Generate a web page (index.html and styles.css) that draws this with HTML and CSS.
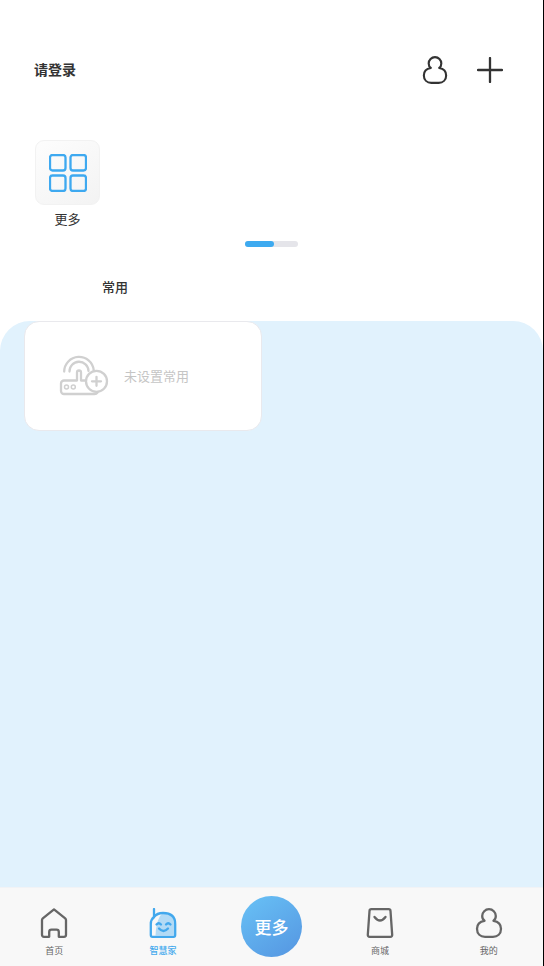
FILE: index.html
```html
<!DOCTYPE html>
<html lang="zh-CN">
<head>
<meta charset="utf-8">
<meta name="viewport" content="width=device-width, initial-scale=1">
<title>智慧家</title>
<link rel="stylesheet" href="styles.css">
</head>
<body>
<svg class="symbols" aria-hidden="true">
  <symbol id="person" viewBox="0 0 28 30">
    <path d="M9.500 12.800C7.600 11.500 7.200 9.500 7.200 8a6.800 6.800 0 0 1 13.600 0C20.800 9.500 20.400 11.500 18.500 12.800C23 13.500 26 16.500 26 20.800C26 25.800 22.500 28.800 18 28.800H10C5.500 28.800 2 25.800 2 20.800C2 16.500 5 13.500 9.500 12.800Z"/>
  </symbol>
</svg>
<header class="topbar">
  <a class="login" href="#login">请登录</a>
  <div class="actions">
    <button type="button" aria-label="账户"><svg class="icon-person" viewBox="0 0 28 30"><use href="#person"/></svg></button>
    <button type="button" aria-label="添加"><svg class="icon-plus" viewBox="0 0 26 26"><path d="M13 1v24M1 13h24"/></svg></button>
  </div>
</header>
<main>
  <section class="shortcuts">
    <a class="shortcut" href="#more">
      <span class="tile">
        <svg viewBox="0 0 38 38"><rect x="1" y="1" width="15.500" height="15.500" rx="2.500"/><rect x="21.500" y="1" width="15.500" height="15.500" rx="2.500"/><rect x="1" y="21.500" width="15.500" height="15.500" rx="2.500"/><rect x="21.500" y="21.500" width="15.500" height="15.500" rx="2.500"/></svg>
      </span>
      <span>更多</span>
    </a>
    <div class="pager"><span></span></div>
  </section>
  <h2>常用</h2>
  <section class="panel">
    <a class="card" href="#common">
      <svg viewBox="0 0 50 42">
        <path d="M5.200 16.500a14.800 14.800 0 0 1 29.500-1.500M10.500 16.500a9.500 9.500 0 0 1 19-.5"/>
        <path d="M27 25.500H22V17.500a2 2 0 0 0-4 0V25.500H5a3 3 0 0 0-3 3V36A3 3 0 0 0 5 39H35.500Q37.500 39 38.500 37.500"/>
        <circle cx="37.500" cy="26.300" r="10.500"/>
        <path d="M37.500 21.800v9M33 26.300h9"/>
        <g class="fine"><circle cx="7.500" cy="32" r="2"/><circle cx="14.300" cy="32" r="2"/></g>
      </svg>
      <span>未设置常用</span>
    </a>
  </section>
</main>
<nav class="tabs">
  <a href="#home"><svg viewBox="0 0 28 30"><path d="M2.800 10.300L14 1.400L25.200 10.300Q26 11 26 12V26.800Q26 28.800 24 28.800H18.800V24Q18.800 21.700 16.500 21.700H11.500Q9.200 21.700 9.200 24V28.800H4Q2 28.800 2 26.800V12Q2 11 2.800 10.300Z"/></svg><span>首页</span></a>
  <a class="active" href="#smart" aria-current="page"><svg viewBox="0 0 28 30"><path class="face" d="M11 8Q7 15 6.500 27.500H25V15Q25 7 18 6H13Z"/><path d="M5 1V9.500M5 9Q8 5 14 5Q26.200 5 26.200 16V27Q26.200 28.800 24.500 28.800H3.500Q1.800 28.800 1.800 27V16Q1.800 11.500 5 9"/><path d="M7.500 16.500Q9.700 14 12 16.500M17 16.500Q19.200 14 21.500 16.500M10 20.500Q14.500 25.500 19 20.500"/></svg><span>智慧家</span></a>
  <a class="main-tab" href="#all"><span>更多</span></a>
  <a href="#shop"><svg viewBox="0 0 28 30"><path d="M5.300 1.200H22.700Q24.400 1.200 24.500 3L26.200 26.800Q26.300 28.800 24.300 28.800H3.700Q1.700 28.800 1.800 26.800L3.500 3Q3.600 1.200 5.300 1.200Z"/><path d="M8.500 9Q14 16 19.500 9"/></svg><span>商城</span></a>
  <a href="#mine"><svg viewBox="0 0 28 30"><use href="#person"/></svg><span>我的</span></a>
</nav>
</body>
</html>
```
FILE: styles.css
```css
* { box-sizing: border-box; }
body {
  margin: 0;
  min-height: 100vh;
  display: flex;
  flex-direction: column;
  border-right: 1px solid #000;
  background: #fff;
  color: #333;
  font-family: "Noto Sans CJK SC", sans-serif;
  font-size: 13px;
  line-height: 20px;
}
a { color: inherit; text-decoration: none; }
svg {
  display: block;
  fill: none;
  stroke: currentColor;
  stroke-width: 2.3;
  stroke-linecap: round;
  stroke-linejoin: round;
}
.symbols { position: absolute; width: 0; height: 0; }
.topbar {
  display: flex;
  align-items: flex-start;
  justify-content: space-between;
  padding: 54px 40px 0 34px;
}
.login { padding-top: 5px; font-size: 14px; font-weight: 700; }
.actions { display: flex; gap: 29px; }
.actions button {
  display: flex;
  align-items: center;
  height: 32px;
  padding: 0;
  border: 0;
  background: none;
  color: #333;
}
.icon-person { width: 26px; height: 28px; }
.icon-plus { width: 26px; height: 26px; }
main { flex: 1; display: flex; flex-direction: column; }
.shortcuts { padding: 54px 35px 0; }
.shortcut {
  display: flex;
  flex-direction: column;
  align-items: center;
  gap: 4px;
  width: 65px;
}
.tile {
  display: grid;
  place-items: center;
  width: 65px;
  height: 65px;
  border: 1px solid #f2f2f2;
  border-radius: 9px;
  background: linear-gradient(145deg, #fdfdfd, #f3f3f3);
  color: #3ea9f0;
}
.tile svg { width: 38px; height: 38px; }
.pager {
  width: 53px;
  height: 6px;
  margin: 12px auto 0;
  border-radius: 3px;
  background: #e5e5ea;
}
.pager span {
  display: block;
  width: 55%;
  height: 100%;
  border-radius: 3px;
  background: #3daaf0;
}
h2 {
  margin: 30px 0 24px 102px;
  font-size: 13px;
  font-weight: 500;
}
.panel {
  flex: 1;
  border-radius: 30px 30px 0 0;
  background: #e1f2fd;
  padding: 0 24px;
}
.card {
  display: flex;
  align-items: center;
  gap: 15px;
  width: 48%;
  min-width: 237px;
  height: 110px;
  padding-left: 34px;
  border: 1px solid #e9e9ed;
  border-radius: 15px;
  background: #fff;
  color: #c5c5c5;
}
.card svg { width: 50px; height: 42px; color: #d0d0d0; }
.card .fine { stroke-width: 1.5; }
.tabs {
  display: grid;
  grid-template-columns: repeat(5, 1fr);
  height: 79px;
  border-top: 1px solid #f1f3f6;
  background: #f8f8f8;
  color: #666;
  font-size: 9px;
  line-height: 14px;
}
.tabs a {
  display: flex;
  flex-direction: column;
  align-items: center;
  gap: 6px;
  padding-top: 20px;
}
.tabs svg { width: 28px; height: 30px; }
.tabs .active { color: #42a8ed; font-weight: 500; }
.face { fill: #b2daf5; stroke: none; }
.tabs .main-tab { padding-top: 8px; }
.main-tab span {
  display: grid;
  place-items: center;
  width: 61px;
  height: 61px;
  border-radius: 50%;
  background: linear-gradient(145deg, #68c2f6, #5595e1);
  color: #fff;
  font-size: 17px;
  font-weight: 500;
}
```
